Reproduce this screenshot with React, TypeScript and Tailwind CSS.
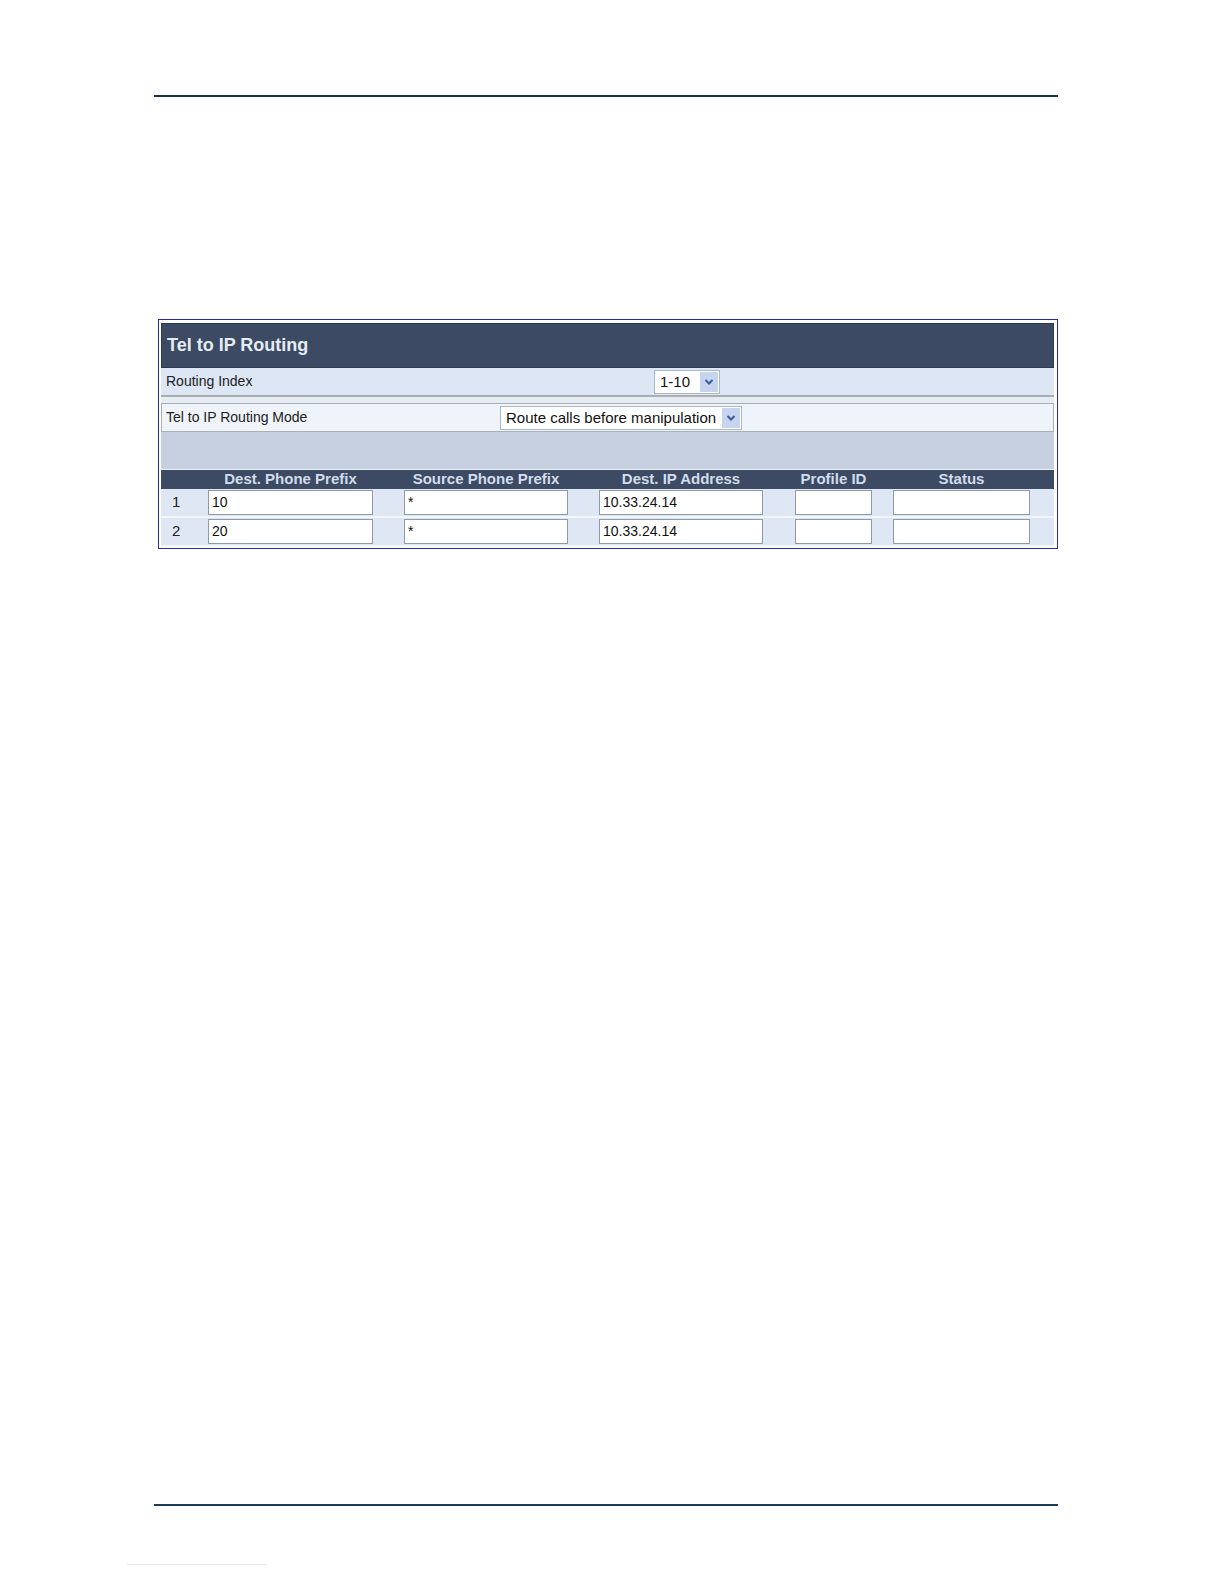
import React from "react";

const font = { fontFamily: '"Liberation Sans", Arial, sans-serif' };

function Chevron() {
  return (
    <svg width="10" height="8" viewBox="0 0 10 8">
      <path d="M1.5 2 L5 5.5 L8.5 2" fill="none" stroke="#3b5a9a" strokeWidth="2" />
    </svg>
  );
}

function Select({ value, width }: { value: string; width: string }) {
  return (
    <div className={`flex h-[24px] items-center border border-[#a8b8cc] bg-white ${width}`}>
      <span className="flex-1 pl-[5px] text-[15px] text-[#111] leading-none">{value}</span>
      <span className="mr-[1px] flex h-[20px] w-[18px] items-center justify-center bg-[#c6d4f0]">
        <Chevron />
      </span>
    </div>
  );
}

function Input({ value, width }: { value: string; width: string }) {
  return (
    <div className={`flex h-[25px] items-center border border-[#8d9aa8] bg-white pl-[3px] text-[14px] text-[#111] ${width}`}>
      {value}
    </div>
  );
}

function DataRow({ n, a, b, c }: { n: string; a: string; b: string; c: string }) {
  return (
    <div className="flex h-[29px] items-center border-b-2 border-[#f2f5fa] bg-[#dfe7f5]">
      <div className="w-[47px] pl-[11px] text-[15px] text-[#222]">{n}</div>
      <Input value={a} width="w-[165px]" />
      <div className="w-[31px]" />
      <Input value={b} width="w-[164px]" />
      <div className="w-[31px]" />
      <Input value={c} width="w-[164px]" />
      <div className="w-[32px]" />
      <Input value="" width="w-[77px]" />
      <div className="w-[21px]" />
      <Input value="" width="w-[137px]" />
    </div>
  );
}

export default function App() {
  return (
    <div className="min-h-[1584px] w-[1224px] bg-white" style={font}>
      <div className="pt-[95px]">
        <div className="ml-[154px] h-[2px] w-[904px] bg-[#1b3548]" />
      </div>

      <div className="ml-[158px] mt-[222px] w-[900px] border border-[#2a2aa8] pb-[1px] pl-[2px] pr-[3px] pt-[3px]">
        {/* title */}
        <div className="flex h-[45px] items-center border border-[#2e3a4e] bg-[#3c4b63] pl-[5px]">
          <span className="text-[18px] font-bold text-[#e6ecf4]">Tel to IP Routing</span>
        </div>
        {/* routing index */}
        <div className="flex h-[29px] items-center border-b-2 border-[#a9b0ab] bg-[#dce6f5] pl-[5px]">
          <span className="w-[488px] text-[14px] text-[#222]">Routing Index</span>
          <Select value="1-10" width="w-[66px]" />
        </div>
        <div className="h-[6px] bg-[#e6ecf5]" />
        {/* mode */}
        <div className="flex h-[29px] items-center border border-[#aab2b0] bg-[#eff3fa] pl-[4px]">
          <span className="w-[334px] text-[14px] text-[#222]">Tel to IP Routing Mode</span>
          <Select value="Route calls before manipulation" width="w-[242px]" />
        </div>
        {/* gray band */}
        <div className="h-[38px] border-b border-[#eef2f8] bg-[#c6d0e0]" />
        {/* table header */}
        <div className="flex h-[19px] items-center bg-[#3c4b63] text-[15px] font-bold text-[#d2dcec]">
          <div className="w-[47px]" />
          <div className="w-[165px] text-center">Dest. Phone Prefix</div>
          <div className="w-[31px]" />
          <div className="w-[164px] text-center">Source Phone Prefix</div>
          <div className="w-[31px]" />
          <div className="w-[164px] text-center">Dest. IP Address</div>
          <div className="w-[32px]" />
          <div className="w-[77px] text-center">Profile ID</div>
          <div className="w-[21px]" />
          <div className="w-[137px] text-center">Status</div>
        </div>
        <DataRow n="1" a="10" b="*" c="10.33.24.14" />
        <DataRow n="2" a="20" b="*" c="10.33.24.14" />
      </div>

      <div className="ml-[154px] mt-[955px] h-[2px] w-[904px] bg-[#1b3a58]" />
      <div className="ml-[127px] mt-[58px] h-px w-[140px] bg-[#e4ecec]" />
    </div>
  );
}
